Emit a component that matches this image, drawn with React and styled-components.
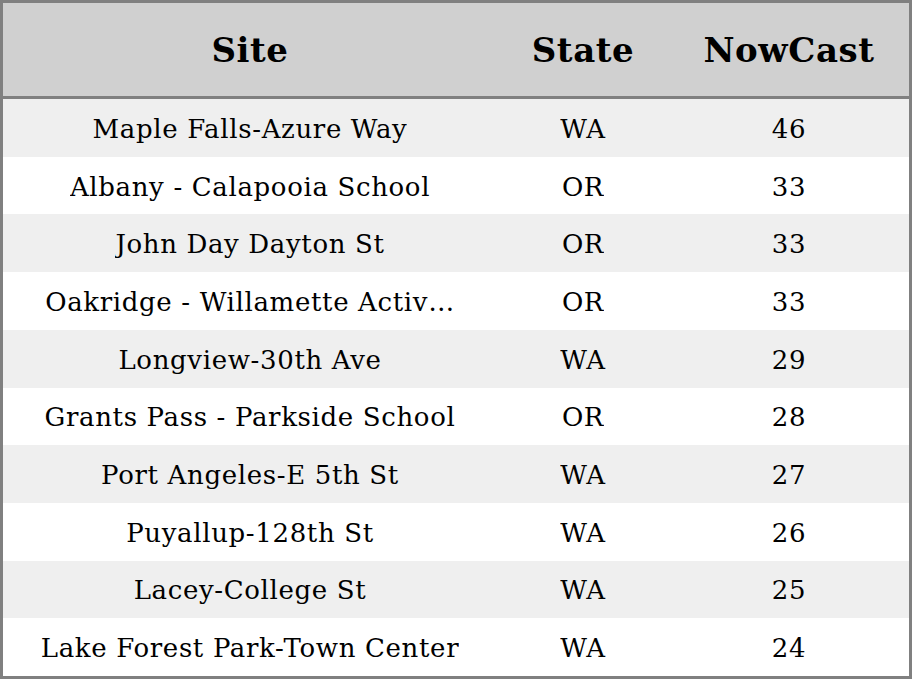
import React from "react";
import styled, { createGlobalStyle } from "styled-components";

const Global = createGlobalStyle`
  html, body { margin: 0; padding: 0; background: #fff; }
  body { font-family: "DejaVu Serif", serif; }
`;

const Table = styled.div`
  box-sizing: border-box;
  width: 912px;
  height: 679px;
  border: 3px solid #808080;
  display: grid;
  grid-template-columns: 494px 172px 1fr;
  grid-template-rows: 96px repeat(10, 1fr);
  font-family: "DejaVu Serif", serif;
  color: #000;
`;

const HeadCell = styled.div`
  background: #d0d0d0;
  border-bottom: 3px solid #808080;
  display: flex;
  align-items: center;
  justify-content: center;
  font-weight: bold;
  font-size: 34px;
  letter-spacing: 0.6px;
`;

const Cell = styled.div`
  background: ${(p) => (p.$odd ? "#efefef" : "#ffffff")};
  display: flex;
  align-items: center;
  justify-content: center;
  font-size: 26px;
  letter-spacing: 0.65px;
  padding: 2px 12px 0;
  min-width: 0;
`;

const Text = styled.span`
  white-space: nowrap;
  overflow: hidden;
  text-overflow: ellipsis;
  max-width: 100%;
`;

const truncate = (s, n = 27) => (s.length > n + 3 ? s.slice(0, n) + "\u2026" : s);

const rows = [
  ["Maple Falls-Azure Way", "WA", 46],
  ["Albany - Calapooia School", "OR", 33],
  ["John Day Dayton St", "OR", 33],
  ["Oakridge - Willamette Activity Center", "OR", 33],
  ["Longview-30th Ave", "WA", 29],
  ["Grants Pass - Parkside School", "OR", 28],
  ["Port Angeles-E 5th St", "WA", 27],
  ["Puyallup-128th St", "WA", 26],
  ["Lacey-College St", "WA", 25],
  ["Lake Forest Park-Town Center", "WA", 24],
];

export default function App() {
  return (
    <>
      <Global />
      <Table>
        <HeadCell>Site</HeadCell>
        <HeadCell>State</HeadCell>
        <HeadCell>NowCast</HeadCell>
        {rows.map((r, i) => (
          <React.Fragment key={i}>
            <Cell $odd={i % 2 === 0}><Text>{truncate(r[0])}</Text></Cell>
            <Cell $odd={i % 2 === 0}><Text>{r[1]}</Text></Cell>
            <Cell $odd={i % 2 === 0}><Text>{r[2]}</Text></Cell>
          </React.Fragment>
        ))}
      </Table>
    </>
  );
}
